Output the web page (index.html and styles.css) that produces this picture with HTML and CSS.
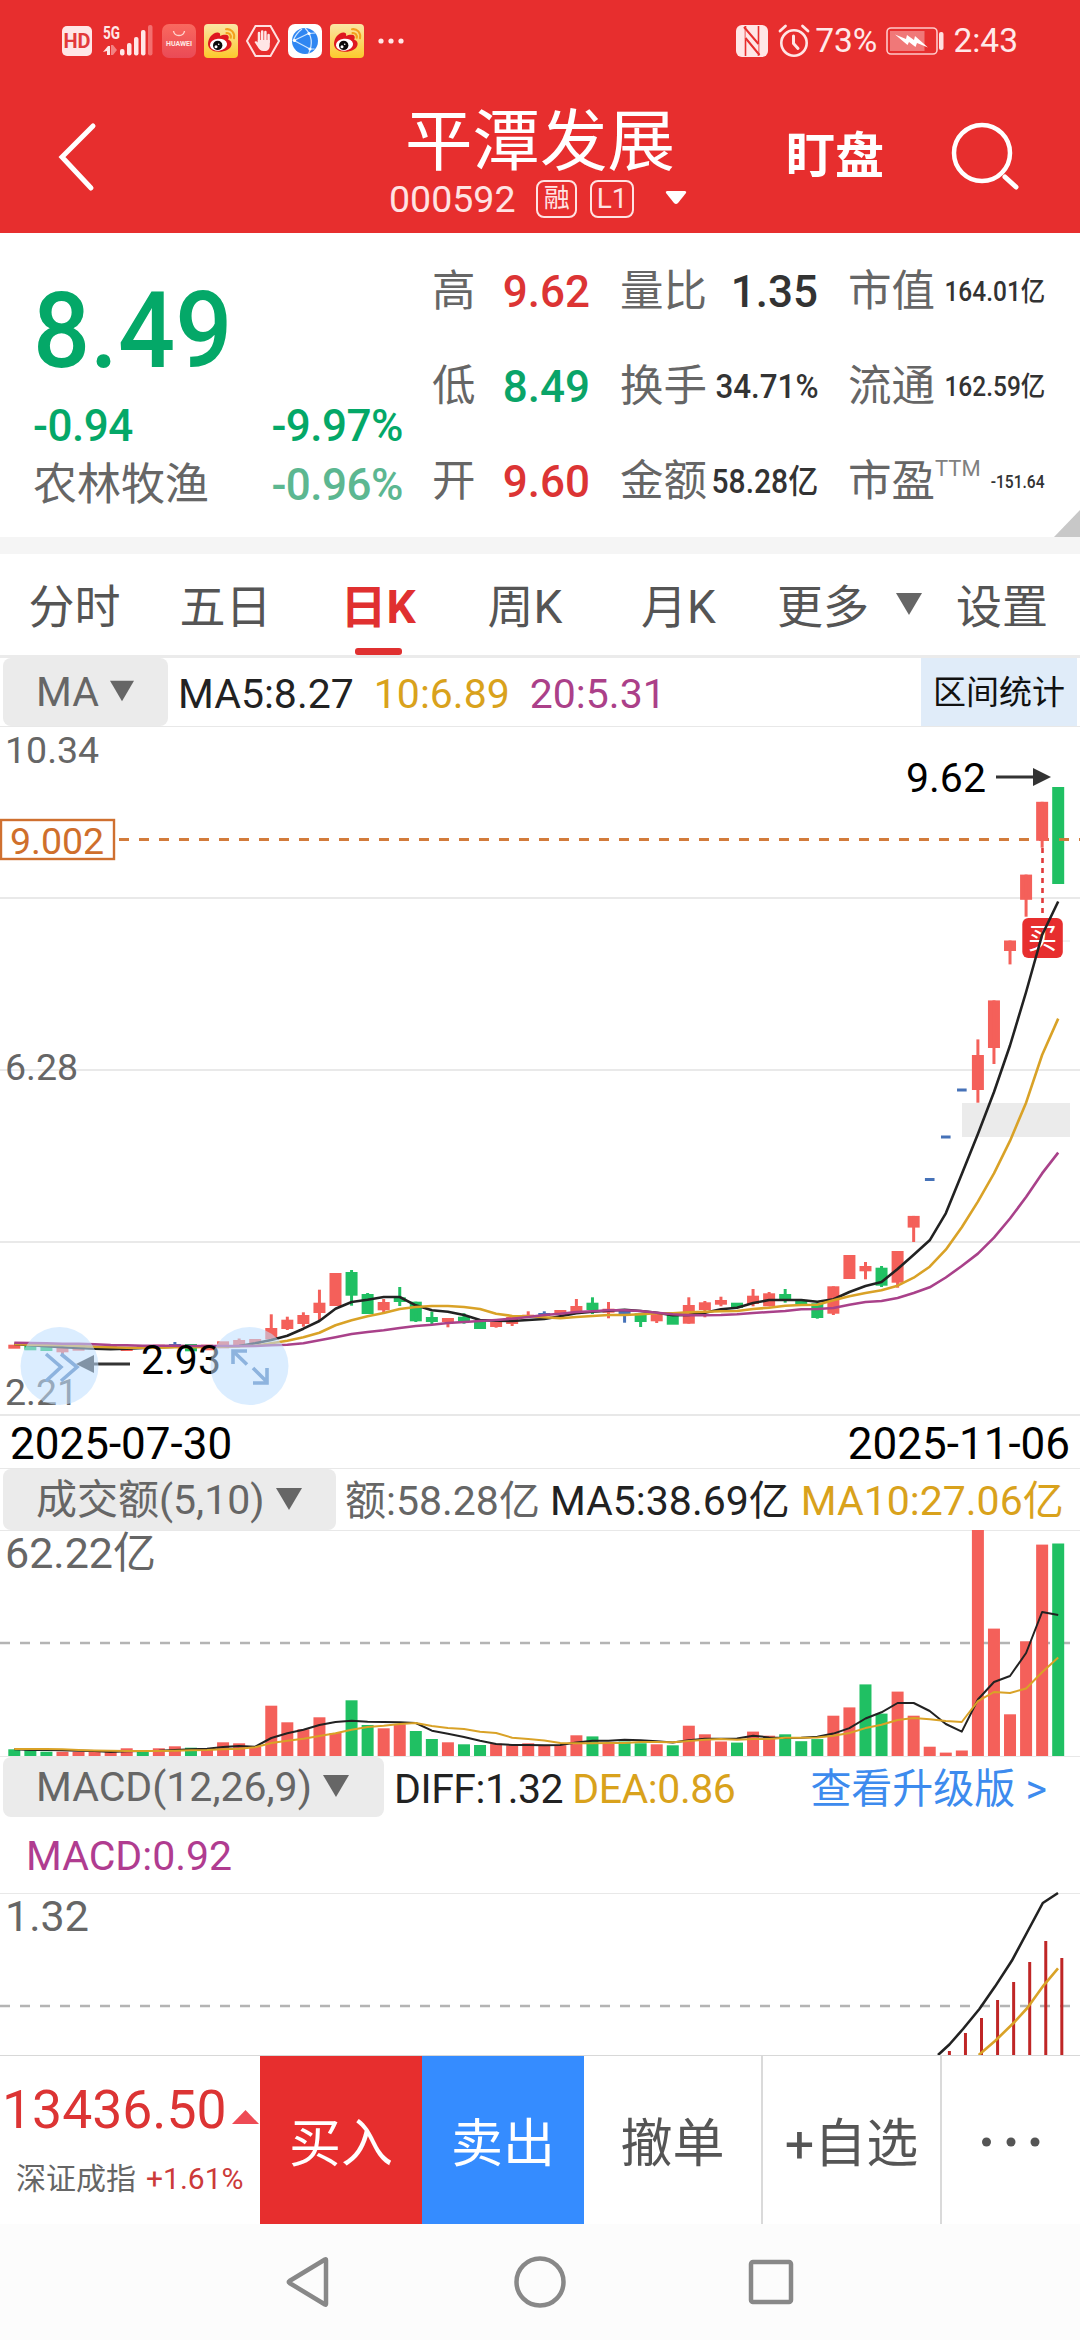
FILE: index.html
```html
<!DOCTYPE html>
<html lang="zh-CN">
<head>
<meta charset="utf-8">
<title>平潭发展 000592</title>
<link rel="stylesheet" href="styles.css">
</head>
<body>
<svg class="defs" width="0" height="0" aria-hidden="true">
  <defs>
    <linearGradient id="wbBg" x1="0" y1="0" x2="0" y2="1"><stop offset="0" stop-color="#fbe6a6"/><stop offset="1" stop-color="#fcc92c"/></linearGradient>
    <linearGradient id="hwBg" x1="0" y1="0" x2="0" y2="1"><stop offset="0" stop-color="#f9695f"/><stop offset="1" stop-color="#ea4a56"/></linearGradient>
    <symbol id="weibo" viewBox="0 0 34 34">
      <rect width="34" height="34" rx="4" fill="url(#wbBg)"/>
      <path d="M4 20C4 14 9 8 14 8.5c2 .3 2.500 1.500 2 3.500 3-1.500 7.500-2 8.500.3.600 1.200 0 2.500-.3 3.400C27 16.500 28 18.500 27.500 21c-1 4.500-7 7-13 6.800C8.500 27.600 4 24.500 4 20z" fill="#df1820"/>
      <ellipse cx="14.500" cy="20.700" rx="8.600" ry="6" fill="#fff" transform="rotate(-6 14.500 20.700)"/>
      <circle cx="13.700" cy="21.400" r="4.700" fill="#0b0b0b"/>
      <circle cx="12" cy="22.700" r="1.500" fill="#fff"/><circle cx="14.700" cy="20.300" r=".8" fill="#fff"/>
      <path d="M22 5.200c5-.8 9.200 3.500 8 9M22.500 9c2.800-.3 4.800 2 4.200 4.800" fill="none" stroke="#f3a01e" stroke-width="2.100" stroke-linecap="round"/>
    </symbol>
    <symbol id="down" viewBox="0 0 26 22"><path d="M0 0h26L13 22z" fill="#666"/></symbol>
  </defs>
</svg>

<div class="phone">
  <header class="header">
    <div class="status">
      <svg width="30" height="30" viewBox="0 0 30 30"><rect width="30" height="30" rx="5" fill="#ffe6e6"/><text x="15" y="21.500" text-anchor="middle" class="hd">HD</text></svg>
      <svg class="signal" width="52" height="34" viewBox="0 0 52 34">
        <text x="0" y="14.500" class="fiveg" textLength="17" lengthAdjust="spacingAndGlyphs">5G</text>
        <path d="M0 28l5-6h2v9H4v-4z" fill="#ffe6e6"/><path d="M8 21h2l4 5-4 5H8z" fill="#f28282"/>
        <g fill="#ffe6e6"><rect x="17" y="25" width="4.500" height="6.500" rx="2"/><rect x="24" y="19" width="4.500" height="12.500" rx="2"/><rect x="31" y="13" width="4.500" height="18.500" rx="2"/><rect x="38" y="6" width="4.500" height="25.500" rx="2"/></g>
        <rect x="45" y="1" width="4.500" height="30.500" rx="2" fill="#f36f6f"/>
      </svg>
      <svg class="s-hw" width="34" height="34" viewBox="0 0 34 34"><rect width="34" height="34" rx="7" fill="url(#hwBg)"/><path d="M11.500 7c1 6 10 6 11 0" fill="none" stroke="#ffd5cf" stroke-width="1.400"/><text x="17" y="22" text-anchor="middle" class="hw" textLength="26" lengthAdjust="spacingAndGlyphs">HUAWEI</text></svg>
      <svg width="34" height="34"><use href="#weibo"/></svg>
      <svg width="34" height="34" viewBox="0 0 34 34"><path d="M9.500 2h15L33 17l-8.500 15h-15L1 17z" fill="none" stroke="#ffe0e0" stroke-width="2"/><path d="M13 18V9M16.200 17V7.500M19.400 17V8M22.600 18v-7" stroke="#ffe6e6" stroke-width="2.500" stroke-linecap="round"/><path d="M11.800 16h12v5.500c0 3.500-1.800 5.500-5 5.500h-1.500c-2.500 0-4.500-2-5.800-4.500L8.500 18c1-1.300 2.200-.8 3.300.6z" fill="#ffe6e6"/></svg>
      <svg width="34" height="34" viewBox="0 0 34 34"><rect width="34" height="34" rx="7" fill="#fff"/><circle cx="17" cy="17" r="13" fill="#2f86f2"/><path d="M6 16.500L20.500 9.500M6 16.500l16 8.500M17 4c7 7 8 16 3.500 26M20.500 9.500l7-.5M22 25l4.500 0M5 17c2-5 5-9 9-12" fill="none" stroke="#cfe6ff" stroke-width="1.200"/><circle cx="6.500" cy="16.500" r="1.600" fill="#fff"/><circle cx="21" cy="9.500" r="1.600" fill="#fff"/><circle cx="22" cy="25" r="1.600" fill="#fff"/></svg>
      <svg width="34" height="34"><use href="#weibo"/></svg>
      <svg class="s-dots" width="26" height="6" viewBox="0 0 26 6" fill="#ffe6e6"><circle cx="3" cy="3" r="2.600"/><circle cx="13" cy="3" r="2.600"/><circle cx="23" cy="3" r="2.600"/></svg>
      <div class="status-right">
        <svg width="32" height="32" viewBox="0 0 32 32"><rect width="32" height="32" rx="6" fill="#ffe6e6"/><path d="M9.500 1v30M22.500 1v30" stroke="#e72e2e" stroke-width="1.600"/><path d="M9.500 2l13 16V31L9.500 14z" fill="#ffe6e6"/><path d="M8 2l14.500 17M9.500 13l14 17" stroke="#e72e2e" stroke-width="2"/></svg>
        <svg class="s-alarm" width="32" height="34" viewBox="0 0 32 34" fill="none" stroke="#ffe6e6" stroke-linecap="round"><circle cx="16" cy="19" r="12.700" stroke-width="2.600"/><path d="M2 7l5.500-5M30 7l-5.500-5" stroke-width="2.800"/><path d="M15.500 12v7.500l4.500 5" stroke-width="3"/></svg>
        <span class="st">73%</span>
        <svg class="s-bat" width="58" height="28" viewBox="0 0 58 28"><rect x="1" y="1" width="50" height="26" rx="4" fill="none" stroke="#ffc9c9" stroke-width="1.600"/><rect x="4" y="4" width="34.500" height="20" fill="#f07878"/><path d="M9 7.500l11 4.500 1-4 7 5 1-4 13 11.500-11-4.500-1.500 4-6.500-5-1.500 3z" fill="#fff"/><rect x="53" y="5" width="4.500" height="18" rx="2" fill="#ffe0e0"/></svg>
        <span class="st">2:43</span>
      </div>
    </div>
    <div class="nav">
      <svg class="back" width="40" height="70" viewBox="0 0 40 70"><path d="M35 4L4 35l29 31" fill="none" stroke="#fff" stroke-width="5" stroke-linecap="round" stroke-linejoin="miter"/></svg>
      <div class="nav-title">
        <h1>平潭发展</h1>
        <div class="code"><span>000592</span><b class="tag">融</b><b class="tag wide">L1</b><svg width="22" height="15" viewBox="0 0 22 15"><path d="M2 1h18q2 .3 1 2l-8 10q-2 2-4 0L1 3q-1-1.700 1-2z" fill="#fff"/></svg></div>
      </div>
      <div class="nav-right"><span class="watch">盯盘</span>
        <svg width="70" height="70" viewBox="0 0 70 70" fill="none" stroke="#fff"><circle cx="32" cy="33" r="28" stroke-width="4.500"/><path d="M55 57l11 10" stroke-width="5" stroke-linecap="round"/></svg>
      </div>
    </div>
  </header>

  <section class="quote">
    <div class="price">
      <div class="last"><span>8.49</span></div>
      <div class="prow"><span>-0.94</span><span>-9.97%</span></div>
      <div class="prow sector"><em>农林牧渔</em><span>-0.96%</span></div>
    </div>
    <div class="stats">
      <div><label>高</label><p><span class="v red">9.62</span></p></div>
      <div><label>量比</label><p><span class="v">1.35</span></p></div>
      <div><label>市值</label><p><span class="v s3">164.01亿</span></p></div>
      <div><label>低</label><p><span class="v green">8.49</span></p></div>
      <div><label>换手</label><p><span class="v s2 pct">34.71%</span></p></div>
      <div><label>流通</label><p><span class="v s3">162.59亿</span></p></div>
      <div><label>开</label><p><span class="v red">9.60</span></p></div>
      <div><label>金额</label><p><span class="v s2">58.28亿</span></p></div>
      <div><label>市盈<sup>TTM</sup></label><p><span class="v s4">-151.64</span></p></div>
    </div>
    <i class="fold"></i>
  </section>

  <nav class="tabs">
    <a>分时</a><a>五日</a><a class="on">日K</a><a>周K</a><a>月K</a>
    <a class="more">更多<svg width="26" height="22"><use href="#down"/></svg></a><a class="set">设置</a>
  </nav>

  <div class="ind ma">
    <div class="chip">MA<svg width="24" height="22"><use href="#down"/></svg></div>
    <span class="k">MA5:8.27</span><span class="y">10:6.89</span><span class="p">20:5.31</span>
    <button class="range">区间统计</button>
  </div>
  <svg class="chart kline" id="kline" viewBox="0 727 1080 687" width="1080" height="687"></svg>
  <div class="dates"><span>2025-07-30</span><span>2025-11-06</span></div>
  <div class="ind vol">
    <div class="chip">成交额(5,10)<svg width="26" height="22"><use href="#down"/></svg></div>
    <span class="g">额:58.28亿</span><span class="k">MA5:38.69亿</span><span class="y">MA10:27.06亿</span>
  </div>
  <svg class="chart" id="volume" viewBox="0 1531 1080 225" width="1080" height="225"></svg>
  <div class="ind macd">
    <div class="chip">MACD(12,26,9)<svg width="26" height="22"><use href="#down"/></svg></div>
    <span class="k">DIFF:1.32</span><span class="y">DEA:0.86</span><a class="link">查看升级版 &gt;</a>
  </div>
  <div class="macd2">MACD:0.92</div>
  <svg class="chart" id="macd" viewBox="0 1894 1080 161" width="1080" height="161"></svg>

  <footer class="actions">
    <div class="index">
      <div class="iv">13436.50<svg width="27" height="14" viewBox="0 0 27 14"><path d="M13.500 0L27 14H0z" fill="#ee4b55"/></svg></div>
      <div class="in"><span>深证成指</span><span class="up">+1.61%</span></div>
    </div>
    <button class="buy">买入</button><button class="sell">卖出</button>
    <button class="cell">撤单</button><button class="cell">+自选</button>
    <button class="dots"><svg width="60" height="10" viewBox="0 0 60 10" fill="#555"><circle cx="5.500" cy="5" r="4.500"/><circle cx="30" cy="5" r="4.500"/><circle cx="54" cy="5" r="4.500"/></svg></button>
  </footer>
  <div class="sysnav">
    <svg width="46" height="54" viewBox="0 0 46 54"><path d="M41 5v44q0 1-1 .5L4.500 28q-1.500-1 0-2L40 4.500q1-.5 1 .5z"/></svg>
    <svg width="54" height="54" viewBox="0 0 54 54"><circle cx="27" cy="27" r="23.500"/></svg>
    <svg width="46" height="46" viewBox="0 0 46 46"><rect x="3" y="3" width="40" height="40" rx="2"/></svg>
  </div>
</div>
<script src="chart.js"></script>
</body>
</html>
```
FILE: styles.css
```css
* { box-sizing: border-box; margin: 0; padding: 0; }
body { background: #fff; font-family: Roboto, "Noto Sans CJK SC", sans-serif; color: #222; }
svg { display: block; flex: none; overflow: visible; }
button { border: 0; background: none; font: inherit; color: inherit; }
.defs { position: absolute; }
.phone { width: 1080px; height: 2340px; overflow: hidden; display: flex; flex-direction: column; }
.phone > * { flex: none; }

.header { height: 233px; background: #e72e2e; color: #fff; }
.status { height: 80px; display: flex; align-items: center; gap: 8px; padding: 2px 62px 0 62px; }
.signal { margin-left: 3px; }
.s-hw { margin-left: -1px; }
.s-dots { margin-left: 6px; }
.hd { font: 700 20px Roboto, sans-serif; fill: #e23a3a; }
.fiveg { font: 700 19px Roboto, sans-serif; fill: #ffe6e6; }
.hw { font: 700 6.500px Roboto, sans-serif; fill: #ffe9e4; }
.status-right { margin-left: auto; display: flex; align-items: center; }
.s-alarm { margin: 0 5px 0 10px; }
.s-bat { margin: 0 9px; }
.st { font-size: 33.500px; line-height: 40px; color: #ffe9e9; }

.nav { height: 153px; display: grid; grid-template-columns: 389px 298px 1fr; align-items: start; }
.back { margin: 42px 0 0 58px; }
.nav-title { padding-top: 24px; }
h1 { font-size: 67.500px; line-height: 76px; font-weight: 400; text-align: center; margin-right: -4px; white-space: nowrap; }
.code { height: 38px; display: flex; align-items: center; font-size: 37.500px; line-height: 38px; color: #ffe3e3; }
.code svg { margin: 0 0 4px 31px; }
.tag { width: 41px; height: 38px; border: 2px solid #ffe3e3; border-radius: 8px; font-size: 26px; line-height: 33px; font-weight: 400; text-align: center; margin-left: 21px; }
.tag.wide { width: 44px; margin-left: 13px; font-size: 28px; line-height: 34px; }
.nav-right { display: flex; padding: 40px 0 0 99px; }
.watch { font-size: 49px; font-weight: 700; line-height: 74px; width: 164px; }

.quote { height: 321px; border-bottom: 17px solid #f5f5f5; display: flex; position: relative; }
.price { width: 432px; padding: 44px 29px 0 33px; color: #04a868; font-weight: 500; }
.last { font-size: 105px; line-height: 110px; margin-bottom: 9px; }
.last span { display: inline-block; transform: scaleX(.957); transform-origin: left; }
.prow { display: flex; justify-content: space-between; font-size: 44px; line-height: 60px; letter-spacing: -.5px; }
.prow em { font-style: normal; font-weight: 400; color: #666; letter-spacing: 0; }
.sector { line-height: 59px; color: #5cb791; }
.stats { display: grid; grid-template-columns: 158px 198px 197px; column-gap: 30px; grid-auto-rows: 95px; padding-top: 11px; }
.stats > div { display: flex; align-items: center; }
.stats label { flex: none; font-size: 43.500px; line-height: 60px; color: #666; }
.stats p { flex: 1; min-width: 0; display: flex; justify-content: flex-end; line-height: 60px; }
.stats sup { font-size: 22px; line-height: 1; vertical-align: 20px; color: #808080; }
.v { font-size: 44px; font-weight: 500; white-space: nowrap; color: #333; transform-origin: right; }
.v.red { color: #dc3434; }
.v.green { color: #0aa468; }
.v.s2 { font-size: 33px; transform: scaleX(.91); }
.v.s2.pct { transform: scaleX(.95); }
.v.s3 { font-size: 27.500px; transform: scaleX(.89); }
.v.s4 { font-size: 17.500px; transform: scaleX(.89); }
.fold { position: absolute; right: 0; bottom: 0; width: 26px; height: 27px; background: #c8c8c8; clip-path: polygon(100% 0, 100% 100%, 0 100%); }

.tabs { height: 104px; border-bottom: 3px solid #ebebeb; display: grid; grid-template-columns: 149px 153px 152px 142px 165px 1fr auto; font-size: 46px; line-height: 60px; color: #555; padding-right: 32px; }
.tabs a { padding-top: 23px; text-align: center; height: 101px; }
.tabs .on { color: #e03030; font-weight: 700; display: flex; flex-direction: column; justify-content: space-between; align-items: center; }
.tabs .on::after { content: ""; width: 47px; height: 7px; border-radius: 3px; background: #e03030; }
.tabs .more { display: flex; padding-left: 16px; }
.tabs .more svg { margin: 16px 0 0 27px; }

.ind { display: flex; font-size: 41px; border-bottom: 1px solid #e8e8e8; white-space: nowrap; }
.chip { background: #ebebeb; color: #666; border-radius: 8px; margin-left: 3px; padding-left: 33px; display: flex; align-items: center; }
.k { color: #222; } .y { color: #d9a21c; } .p { color: #ab4089; } .g { color: #666; }
.ma { height: 69px; line-height: 72px; }
.ma .chip { width: 165px; margin-right: 10px; }
.ma .chip svg { margin: -2px 0 0 11px; }
.ma .y, .ma .p { margin-left: 20px; }
.range { margin: 0 3px 0 auto; width: 156px; background: #e0ecf9; color: #111; font-size: 33px; line-height: 69px; }
.dates { height: 55px; border-top: 2px solid #e8e8e8; border-bottom: 1px solid #e8e8e8; display: flex; justify-content: space-between; padding: 0 10px 0 10px; font-size: 44px; line-height: 57px; color: #000; }
.vol { height: 62px; line-height: 64px; }
.vol .chip { width: 333px; margin-right: 9px; line-height: 60px; }
.vol .chip svg { margin: -2px 0 0 11px; }
.vol .k { margin-left: 10px; } .vol .y { margin-left: 11px; }
.macd { height: 61px; line-height: 64px; border: 0; border-top: 1px solid #e8e8e8; }
.macd .chip { width: 381px; margin-right: 10px; line-height: 60px; }
.macd .chip svg { margin: -2px 0 0 11px; }
.macd .k, .macd .y { letter-spacing: -.45px; }
.macd .y { margin-left: 9px; }
.link { color: #3d8bee; margin: 0 33px 0 auto; }
.macd2 { height: 77px; border-bottom: 1px solid #e8e8e8; padding-left: 26px; font-size: 41px; line-height: 78px; color: #b03c90; }

.axis { font-size: 37.500px; fill: #666; }
.axis.big { font-size: 43px; }
.axis.cost { fill: #cf6f2c; }
.mark { font-size: 41px; fill: #000; }
.badge { font-size: 29px; fill: #fff; }

.actions { height: 169px; border-top: 1px solid #d8d8d8; display: flex; font-size: 52px; color: #555; }
.index { width: 260px; color: #dc3434; padding: 19px 0 0 2px; }
.iv { font-size: 53.500px; line-height: 70px; display: flex; }
.iv svg { margin: 35px 0 0 5px; }
.in { display: flex; font-size: 30px; line-height: 40px; padding: 14px 0 0 14px; color: #666; gap: 10px; }
.in .up { color: #cc3a3a; }
.actions button { line-height: 178px; height: 168px; }
.buy { width: 162px; background: #e72e2e; color: #fff; }
.sell { width: 162px; background: #358cff; color: #fff; }
.cell { width: 179px; border-right: 2px solid #dadada; }
.dots { flex: 1; display: flex; align-items: center; justify-content: center; }
.dots svg { margin-top: 4px; }
.sysnav { height: 116px; background: #fcfcfc; display: flex; align-items: center; padding: 0 286px 0 285px; justify-content: space-between; }
.sysnav svg { fill: none; stroke: #888; stroke-width: 4.500; stroke-linejoin: round; }
```
FILE: chart.js
```js
const RED = '#f4605a', GREEN = '#20c063', BLUE = '#4672b8';
const COLOR = { r: RED, g: GREEN, b: BLUE };
const X = i => 14.3 + 16.06 * i;

// colour, body top, body bottom, high, low (0 = no wick)
const candles = [
  ['r',1344.7,1348.7],['g',1345.3,1350.3],['g',1346,1351],['r',1348,1352.3,0,1354],['r',1348,1350.7],['r',1346,1348],
  ['r',1346,1348],['r',1347.3,1351],['g',1346,1348],['r',1344.7,1348],['b',1344,1345.7,1342],['g',1344,1351.3],
  ['r',1344.7,1350.3],['r',1341.3,1348.3],['r',1340,1346.7,1338.5],['r',1339,1344],['r',1328,1339.3,1314.3],
  ['r',1319.7,1329,1316.7,1330],['r',1315,1324,1312.3,1326.7],['r',1302.7,1313,1289.7,1320],['r',1273,1306],
  ['g',1272,1295.7,1270,1305.7],['g',1294,1314,1293],['r',1302,1310.3,1299,1313],['g',1297.3,1302,1287,1306],
  ['g',1301.7,1321.3,0,1322],['g',1317,1322,1311.7,1324],['r',1318,1322,0,1327.3],['g',1316.7,1322,1313.3,1323.7],
  ['g',1321,1329],['r',1322,1327,0,1327.7],['r',1317,1324,0,1326],['r',1314.7,1317,1311.3],
  ['b',1313,1316,1311.3],['r',1310,1314.7],['r',1306,1312.3,1299],['g',1302.7,1310,1297.3,1314],
  ['r',1308.7,1312.7,1302,1318.3],['b',1310,1314,0,1322.7],['g',1313.3,1322,0,1327],['r',1314,1321.3,0,1323],
  ['g',1315,1324.7],['r',1305,1323.7,1297.3],['r',1302.3,1310,1301,1317.3],['r',1300,1304.7,1296.7,1306.3],
  ['g',1302.7,1308],['r',1295.7,1304,1289,1306.3],['r',1293.3,1306.3,1292],['g',1294,1300.7,1289,1302.7],
  ['g',1300,1305.3],['g',1303.3,1318,0,1318.7],['r',1286.3,1313.7,0,1315],['r',1255,1279],
  ['r',1266,1271.3,1262,1279.3],['g',1267.7,1285.7,1266,1287],['r',1251,1282.7,0,1287.7],
  ['r',1215.9,1227.6,0,1242],['-',1179.5],['-',1137],['-',1090],['r',1055,1090,1039.4,1102.7],
  ['r',1000.4,1048,0,1064],['r',940.5,951,0,964.4],['r',874.6,899.8,0,916.7],['r',801.8,840.8,0,847.7],['g',787,884]
];
const ma5 = [1344,1345.3,1346.3,1347.3,1348,1348.7,1349.3,1348.7,1348,1347.3,1346.7,1346.3,1346.3,1346.3,1346,1343.3,1340,1335.7,1328.7,1321,1308.7,1302,1299.7,1297,1297,1305.3,1310.3,1311.7,1315,1320,1320.7,1321,1320,1319,1316.3,1313.3,1311.7,1310.7,1309.7,1311,1312.7,1315.3,1315,1312.7,1309.3,1307.7,1303,1300,1300,1300,1301.7,1299.3,1292,1286,1282,1269,1254.7,1240.3,1213.3,1174,1134,1092,1045.5,992,935,901.5];
const ma10 = [1344,1344.7,1345,1345.3,1346,1346.7,1347.3,1347.7,1347.7,1347.7,1347.3,1347.3,1347,1346.7,1346.3,1345.7,1343.3,1340.7,1337.3,1332.7,1325.3,1320.3,1316.3,1313,1309,1307,1306,1306,1307,1309,1313.7,1316,1316.3,1317.3,1318.3,1317,1316,1315,1315,1314.3,1313.3,1313.3,1312.3,1311.7,1311.3,1311,1309,1307.7,1305.7,1305,1304.7,1300.3,1296.3,1293,1290.3,1285.7,1277.7,1266.7,1249.7,1227.2,1201.6,1173.4,1140.9,1102.7,1055,1018.6];
const ma20 = [1342.7,1343,1343.3,1343.7,1343.7,1344.3,1345,1345.3,1345.7,1345.7,1345.7,1346,1346,1346,1346,1346,1345.3,1344.7,1343.3,1340.3,1337.3,1334,1332,1330.3,1328,1326,1324.7,1323,1322,1321,1320,1318.7,1317,1315,1313.7,1312,1311.3,1310.3,1310.3,1311,1312.7,1314.3,1315.3,1315.3,1315,1314.3,1313,1312,1311,1309.3,1309,1308,1304.7,1302,1301,1298,1293,1287.3,1277.5,1266,1253.6,1237.6,1218.5,1197,1173.4,1152.6];

const volumes = [6.7,6,4.3,4.3,4.3,4,4,7.7,4.3,7.7,9.7,8.3,7.3,13.7,12.7,9,50.3,33.7,26.7,38.7,23,55.7,31,27.7,31.7,25,17,13.7,11.7,11,12.3,10.7,12.7,10.3,10.7,20.7,19.6,12.7,14.5,12.7,11.7,10.7,30.3,21.7,14.5,13.4,24.4,20.3,21.7,14.8,16.9,40.3,48.6,71.6,42.4,64.4,40.3,9.3,3.4,5.5,226,127.4,41.7,114.7,211.4,212.5];
const volColor = 'gggrrrrrgrrgrrrrrrrrrggrrggrggrrrrrrgrggrgrrrgrrgggrrggrrrrrrrrrrg';
const vma5 = [6.7,6,6,5.7,5.3,5,4,4.7,5,5.3,6,6.7,7.3,9,10,9.3,18,22.7,26.3,31,34,35.3,34.3,34,33.7,33,25.3,22.3,19,15.3,12,11,11,10.7,11,13.4,15.2,15.2,16.2,15.8,14.8,13.4,15.8,17.2,17.2,17.6,20.3,18.6,17.9,18.3,19.3,22.4,27.9,37.5,43.7,53,53,45,32,24.4,56.5,74,80,103,144,141];
const vma10 = [7,7,7,6.8,6,5.5,5.2,5,5,5,5.2,5.7,6,6.7,7.3,8.7,13,15.3,17.3,20,22.7,26.3,29,30.3,32,33,30,28,27,24.3,23,18.3,17,15.5,13.1,12.7,12.7,13,13,14,14,13.8,15,16.2,16.9,16.2,17,17,18.3,18.3,18.6,20.3,23,27.9,31.3,36,37.9,36.8,35,34,54.8,64,63,67.5,83.7,98.5];

const line = (pts, color, w = 2.6) =>
  `<polyline points="${pts.map(p => p.map(n => n.toFixed(1)).join()).join(' ')}" fill="none" stroke="${color}" stroke-width="${w}" stroke-linejoin="round"/>`;
const series = (ys, color, w) => line(ys.map((y, i) => [X(i), y]), color, w);
const hline = (y, color, w, dash = '', x1 = 0, x2 = 1080) =>
  `<path d="M${x1} ${y}H${x2}" stroke="${color}" stroke-width="${w}" stroke-dasharray="${dash}"/>`;

let k = [898, 1070, 1242].map(y => hline(y, '#e9e9e9', 2)).join('');
k += hline(839.5, '#d27b3b', 2.8, '10 10', 119);
k += '<rect x="962" y="1103" width="108" height="34" fill="#ebebeb"/>' + hline(941, '#e6e6e6', 1, '', 1062, 1070);
candles.forEach(([c, top, bottom, high, low], i) => {
  const x = X(i);
  if (c === '-') { k += `<rect x="${x - 4.8}" y="${top - 1.5}" width="9.6" height="3" fill="${BLUE}"/>`; return; }
  k += `<rect x="${x - 6}" y="${top}" width="12" height="${bottom - top}" fill="${COLOR[c]}"/>`;
  if (high || low) k += `<path d="M${x} ${high || top}V${low || bottom}" stroke="${COLOR[c]}" stroke-width="3"/>`;
});
k += '<path d="M1042.5 848V915" stroke="#e03a3a" stroke-width="2.6" stroke-dasharray="5 5"/>' + hline(839.5, '#d27b3b', 2.8, '', 1059, 1069);
k += '<rect x="1022.3" y="918" width="40.5" height="40" rx="6" fill="#e72e2e"/><text class="badge" x="1042.5" y="949" text-anchor="middle">买</text>';
k += series(ma5, '#222') + series(ma10, '#d9a227') + series(ma20, '#a9418a');
k += `<text class="axis" x="5" y="763">10.34</text>
<rect x="1" y="820" width="113" height="39" fill="#fff" stroke="#cf7030" stroke-width="2.4"/>
<text class="axis cost" x="10" y="854">9.002</text>
<text class="axis" x="5" y="1080">6.28</text><text class="axis" x="5" y="1405">2.21</text>
<text class="mark" x="906" y="792">9.62</text><path d="M996 777H1036" stroke="#333" stroke-width="3"/><path d="M1033 768l18 9-18 9z" fill="#333"/>
<text class="mark" x="141" y="1374">2.93</text><path d="M92 1364H130" stroke="#333" stroke-width="3"/><path d="M94 1355l-18 9 18 9z" fill="#333"/>
<g fill="rgb(190,223,255)" fill-opacity=".56"><circle cx="59.5" cy="1366" r="39"/><circle cx="249.5" cy="1366" r="39"/></g>
<g fill="none" stroke="#8db3de" stroke-width="3.6"><path d="M46 1354l15 13-15 14M61 1354l16 13-16 14"/>
<path d="M233 1364v-13h14M234 1352l13 12.500M253 1368l14 14M267 1368v15h-14"/></g>`;
document.getElementById('kline').innerHTML = k;

let v = hline(1643, '#b4b4b4', 2.4, '10 10', 0, 1070);
volumes.forEach((h, i) => { v += `<rect x="${X(i) - 6}" y="${1756 - h}" width="12" height="${h}" fill="${COLOR[volColor[i]]}"/>`; });
v += series(vma5.map(h => 1756 - h), '#222', 2) + series(vma10.map(h => 1756 - h), '#d9a227', 2);
v += '<text class="axis big" x="5" y="1568">62.22亿</text>';
document.getElementById('volume').innerHTML = v;

let m = hline(2006, '#b4b4b4', 2.4, '10 10', 0, 1070);
[2051, 2033, 2018, 2000, 1982, 1962, 1941, 1958].forEach((y, i) => {
  m += `<path d="M${949.4 + 16.06 * i} ${y}V2055" stroke="#bf2626" stroke-width="3"/>`;
});
m += line([[938,2055],[949.4,2044.5],[963,2029],[979.4,2009],[995,1986.6],[1011.8,1960.8],[1027,1932.5],[1042.8,1903],[1058,1893]], '#222');
m += line([[978.7,2055],[995,2041],[1013.8,2022.8],[1027.3,2008],[1043.5,1985.6],[1058,1968.4]], '#d9a227');
m += '<text class="axis big" x="5" y="1931">1.32</text>';
document.getElementById('macd').innerHTML = m;
```
